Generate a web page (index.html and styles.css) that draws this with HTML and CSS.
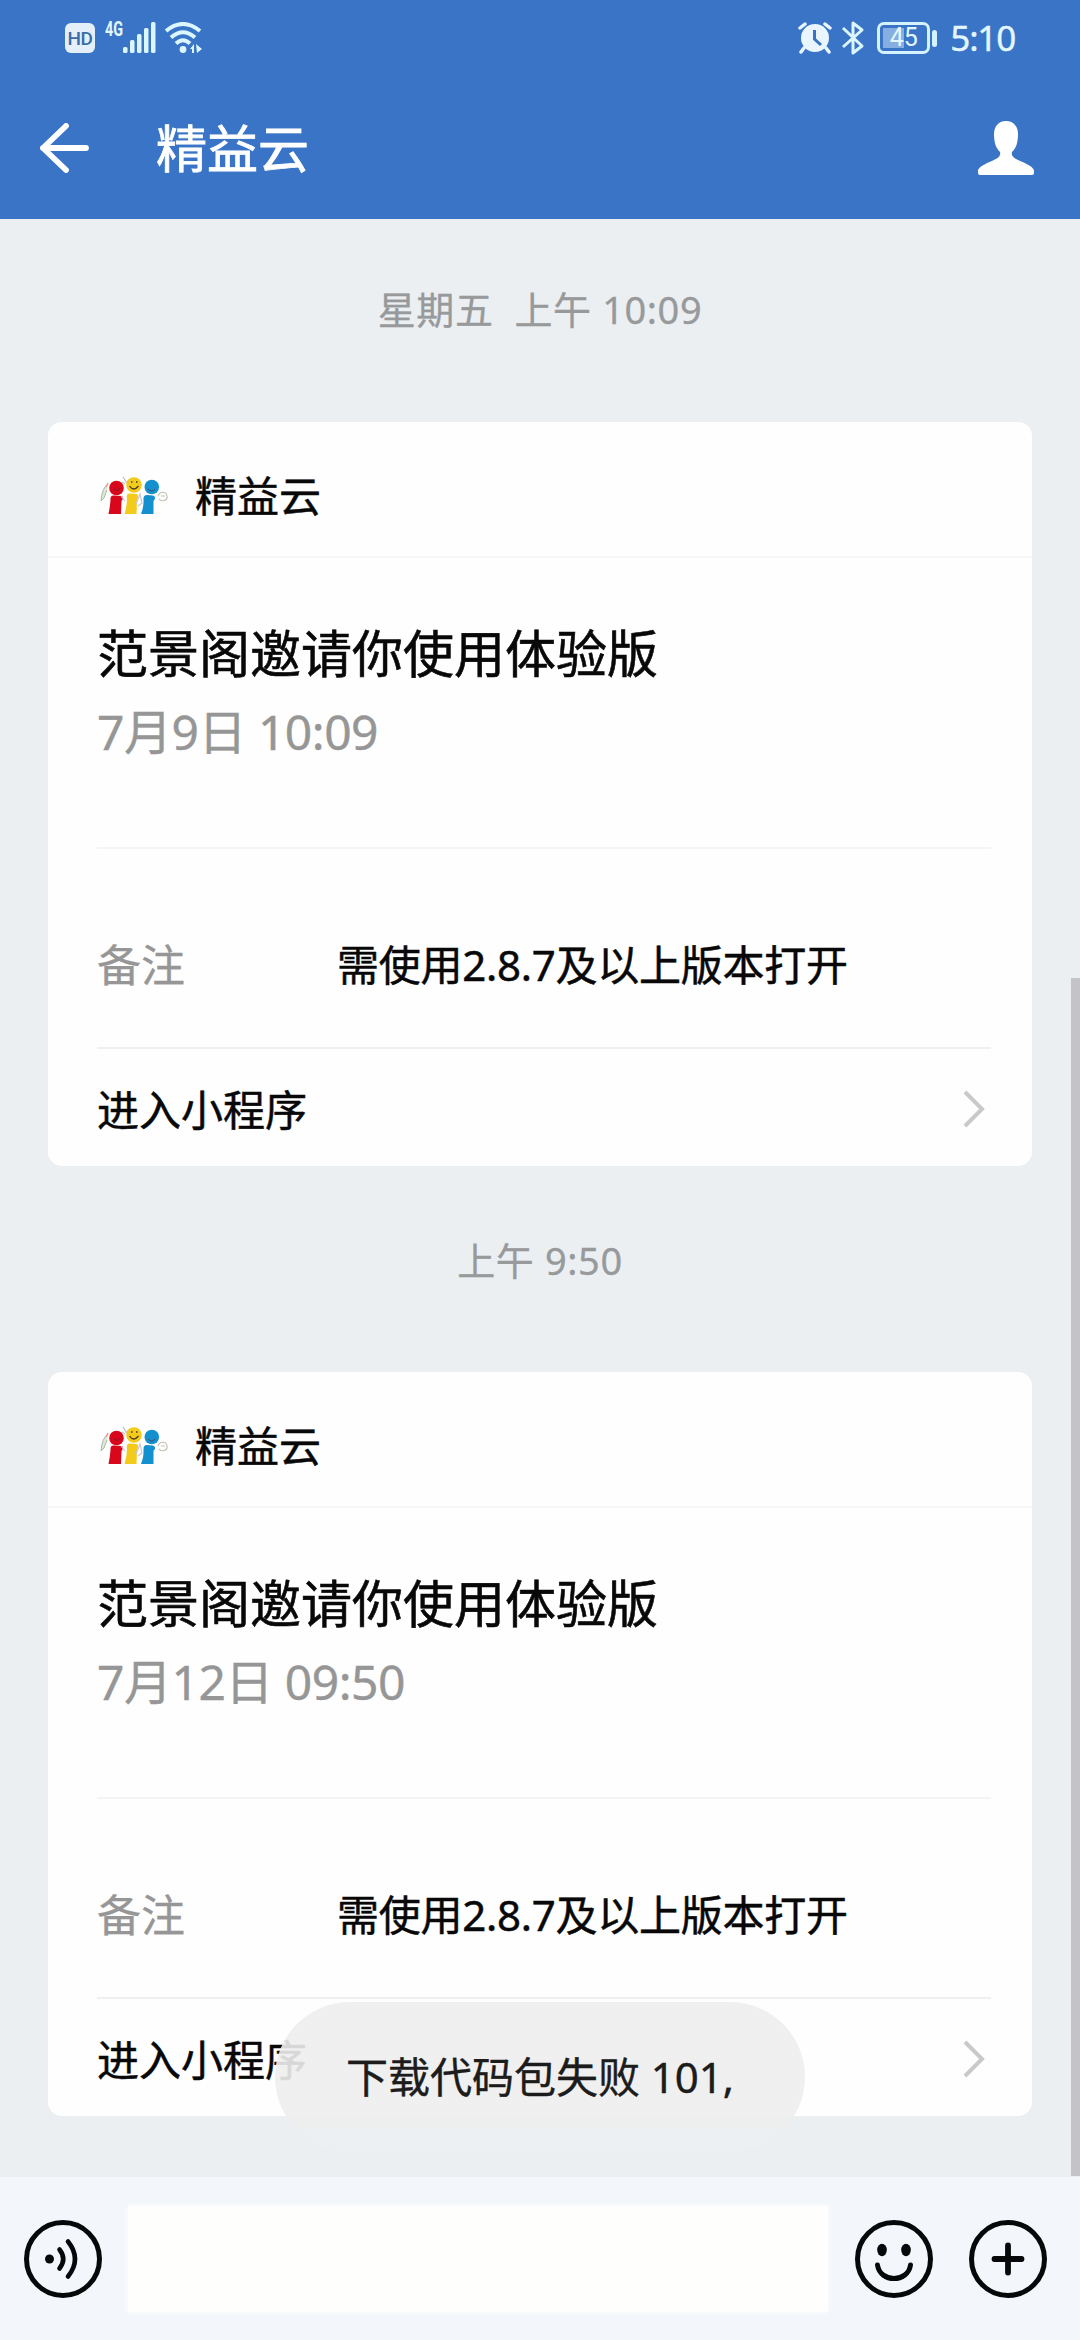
FILE: index.html
```html
<!DOCTYPE html>
<html lang="zh-CN">
<head>
<meta charset="utf-8">
<title>精益云</title>
<link rel="stylesheet" href="styles.css">
</head>
<body>
<svg width="0" height="0" class="defs" aria-hidden="true">
  <symbol id="logo" viewBox="0 0 70 44">
    <path d="M9 10 Q3 14 2 27 L5 24 L8 16" fill="#dfe9da" stroke="#a8b8a0" stroke-width="1"/>
    <path d="M7 13l2-4" stroke="#e79a8c" stroke-width="1.400"/>
    <path d="M24 3l4 6M27 9l4-4M23 8l3 2" fill="none" stroke="#c3bac6" stroke-width="1.200"/>
    <path d="M9.500 40Q11 33 11.500 26Q11 21 15 21.500L23 22Q25 24 22.500 27L22 40Z" fill="#d8071c"/>
    <circle cx="17.500" cy="14" r="7.300" fill="#d8071c"/>
    <path d="M25.500 40Q28 32 28 25Q27 19 31 19.500L38 20Q40 22 38 26L37.500 40Z" fill="#f2cb1d"/>
    <circle cx="35" cy="11" r="7.800" fill="#f2cb1d"/>
    <path d="M42 40Q45 32 44.500 26Q44 21 48 21L54 21.500Q58 23 54.500 27L54.500 40Z" fill="#1590cf"/>
    <circle cx="52.800" cy="13" r="7.300" fill="#1590cf"/>
    <path d="M30.500 12q4 6 9 0M32 8h1.500M37 8h1.500" fill="none" stroke="#4b3a20" stroke-width="1.300"/>
    <path d="M15 15q4 3 6-1M49 15q4 4 7 0" fill="none" stroke="#5a2030" stroke-opacity=".6" stroke-width="1"/>
    <path d="M59 22c2-5 8-5 9 0s-6 6-8 3M62 22h4" fill="none" stroke="#c6c0b4" stroke-width="1.200"/>
    <path d="M37 30l4-10 2 9-4 3M22 22l4 5" fill="none" stroke="#c9c6d6" stroke-width="1.200"/>
  </symbol>
  <symbol id="chevron" viewBox="0 0 24 40">
    <path d="M3 3L20 20L3 37" fill="none" stroke="#c9c9c9" stroke-width="4"/>
  </symbol>
</svg>
<div class="screen">
  <header class="top">
    <div class="status">
      <div class="status-left">
        <span class="hd">HD</span>
        <span class="net">4G</span>
        <svg class="signal" width="33" height="32" viewBox="0 0 33 32" fill="#dcf6ff"><rect x="0" y="25" width="4.500" height="6" rx="1.500"/><rect x="7" y="18" width="4.500" height="13" rx="1.500"/><rect x="14" y="12" width="4.500" height="19" rx="1.500"/><rect x="21" y="6" width="4.500" height="25" rx="1.500"/><rect x="28" y="0" width="4.500" height="31" rx="1.500"/></svg>
        <svg class="wifi" width="38" height="32" viewBox="0 0 38 32"><g fill="none" stroke="#dcf6ff" stroke-width="4"><path d="M1 9Q18 -5 35 9"/><path d="M6 15.500Q18 5 30 15.500"/><path d="M11 21.500Q18 15 25 21.500"/></g><circle cx="18" cy="27.500" r="3.400" fill="#dcf6ff"/><path d="M25 27L29 22V31H27V27ZM31 22L37 27L32 31Z" fill="#dcf6ff"/></svg>
      </div>
      <div class="status-right">
        <svg class="alarm" width="34" height="32" viewBox="0 0 34 32"><circle cx="17" cy="16" r="14" fill="#eaf6ff"/><path d="M2 6L7 2M27 2L32 6M6 26L3 30M28 26L31 30" stroke="#eaf6ff" stroke-width="3.500" stroke-linecap="round"/><path d="M16.500 8V17L23 23" fill="none" stroke="#3974c4" stroke-width="3"/></svg>
        <svg class="bt" width="24" height="36" viewBox="0 0 24 36"><path d="M2 8L21 26L12 33V3L21 10L2 27" fill="none" stroke="#dcf6ff" stroke-width="3" stroke-linejoin="round"/></svg>
        <div class="battery"><span class="cell">45</span><span class="tip"></span></div>
        <span class="clock">5:10</span>
      </div>
    </div>
    <div class="nav">
      <svg class="back" width="52" height="50" viewBox="0 0 52 50"><path d="M27 3L4 25L27 47M4 25H47" fill="none" stroke="#fff" stroke-width="5.800" stroke-linecap="round" stroke-linejoin="round"/></svg>
      <h1 class="nav-title">精益云</h1>
      <svg class="user" width="58" height="56" viewBox="0 0 58 56"><path d="M29 1C21 1 17 7 17 14C17 23 19 28 23 32C24 36 21 38 17 40C8 44 1 47 1 51V53Q1 55 3 55H55Q57 55 57 53V51C57 47 50 44 41 40C37 38 34 36 35 32C39 28 41 23 41 14C41 7 37 1 29 1Z" fill="#fff"/></svg>
    </div>
  </header>
  <main class="chat">
    <p class="stamp stamp-first">星期五&nbsp; 上午 10:09</p>
    <section class="card">
      <div class="card-head"><svg class="logo" width="70" height="44"><use href="#logo"/></svg><span class="app">精益云</span></div>
      <div class="card-body">
        <div class="intro"><h2 class="card-title">范景阁邀请你使用体验版</h2><p class="date">7月9日 10:09</p></div>
        <div class="note"><span class="label">备注</span><span class="value">需使用2.8.7及以上版本打开</span></div>
        <div class="enter"><span class="link">进入小程序</span><svg class="chev" width="24" height="40"><use href="#chevron"/></svg></div>
      </div>
    </section>
    <p class="stamp stamp-next">上午 9:50</p>
    <section class="card">
      <div class="card-head"><svg class="logo" width="70" height="44"><use href="#logo"/></svg><span class="app">精益云</span></div>
      <div class="card-body">
        <div class="intro"><h2 class="card-title">范景阁邀请你使用体验版</h2><p class="date">7月12日 09:50</p></div>
        <div class="note"><span class="label">备注</span><span class="value">需使用2.8.7及以上版本打开</span></div>
        <div class="enter"><span class="link">进入小程序</span><svg class="chev" width="24" height="40"><use href="#chevron"/></svg></div>
      </div>
    </section>
    <div class="scrollbar"></div>
    <div class="toast">下载代码包失败 101,</div>
  </main>
  <footer class="composer">
    <svg class="round" width="78" height="78" viewBox="0 0 78 78" fill="none" stroke="#06080a" stroke-width="5" stroke-linecap="round"><circle cx="39" cy="39" r="36.500"/><circle cx="25.500" cy="39" r="4.500" fill="#06080a" stroke="none"/><path d="M35.500 29.500Q43 39 35.500 48.500M44 21.500Q58 39 44 56.500" stroke-width="4.600"/></svg>
    <div class="input"></div>
    <svg class="round" width="78" height="78" viewBox="0 0 78 78" fill="none" stroke="#06080a" stroke-width="5" stroke-linecap="round"><circle cx="39" cy="39" r="36.500"/><g fill="#06080a" stroke="none"><ellipse cx="27" cy="30" rx="4.800" ry="6.200"/><ellipse cx="51" cy="30" rx="4.800" ry="6.200"/></g><path d="M22.500 45C25 63 53 63 55.500 45"/></svg>
    <svg class="round" width="78" height="78" viewBox="0 0 78 78" fill="none" stroke="#06080a" stroke-width="5" stroke-linecap="round"><circle cx="39" cy="39" r="36.500"/><path d="M39 25.500V52.500M25.500 39H52.500" stroke-width="5.800"/></svg>
  </footer>
</div>
</body>
</html>
```

FILE: styles.css
```css
* { box-sizing: border-box; margin: 0; padding: 0; }
body { font-family: "Noto Sans", "Noto Sans CJK SC", sans-serif; font-weight: 400; color: #080808; }
svg { display: block; flex: none; }
.defs { position: absolute; }
.screen { width: 1080px; height: 2340px; display: flex; flex-direction: column; overflow: hidden; background: #ebeff2; }

.top { height: 219px; flex: none; background: #3974c6; display: flex; flex-direction: column; }
.status { height: 76px; display: flex; justify-content: space-between; padding: 0 65px 0 65px; color: #e2f7ff; }
.status-left, .status-right { display: flex; align-items: center; }
.hd { width: 30px; height: 30px; border-radius: 6px; background: #e4effa; color: #3b6ca8; font: 500 19px/31px Roboto, sans-serif; text-align: center; letter-spacing: -0.5px; }
.net { width: 18px; margin-left: 10px; margin-bottom: 18px; font: 700 20px/20px Roboto, sans-serif; transform: scaleX(0.72); transform-origin: left; }
.wifi { margin-left: 9px; }
.bt { margin-left: 9px; }
.battery { display: flex; align-items: center; margin-left: 12px; }
.cell { width: 53px; height: 32px; border: 3px solid #d4f3ff; border-radius: 7px; font: 400 25px/26px Roboto, sans-serif; text-align: center; background: linear-gradient(90deg, #87aee0 0 21px, transparent 21px) 3px 3px / 44px 20px no-repeat; }
.tip { width: 5px; height: 17px; border-radius: 3px; background: #d4f3ff; margin-left: 2px; }
.clock { margin-left: 13px; font-size: 35px; line-height: 76px; letter-spacing: -1.2px; -webkit-text-stroke: 0.4px; }

.nav { height: 143px; display: flex; align-items: center; padding: 0 45px 0 39px; }
.nav-title { margin-left: 65px; flex: 1; font-size: 51px; line-height: 70px; font-weight: 400; color: #fff; -webkit-text-stroke: 0.8px; }

.chat { flex: 1; position: relative; display: flex; flex-direction: column; }
.stamp { font-size: 38px; line-height: 54px; letter-spacing: 0.6px; text-align: center; color: #97999b; -webkit-text-stroke: 0.3px; }
.stamp-first { margin: 63px 0 86px; }
.stamp-next { margin: 67px 0 85px; }
.card { height: 744px; flex: none; margin: 0 48px; border-radius: 14px; background: #fefefe; }
.card-head { height: 136px; display: flex; align-items: center; padding: 14px 0 0 51px; border-bottom: 2px solid #f7f7f7; }
.app { margin-left: 26px; font-size: 42px; line-height: 60px; -webkit-text-stroke: 0.5px; }
.card-body { padding: 0 41px 0 49px; }
.intro { height: 291px; padding-top: 60px; border-bottom: 2px solid #f4f4f4; }
.card-title { font-size: 51px; line-height: 70px; font-weight: 400; -webkit-text-stroke: 0.6px; }
.date { font-size: 48px; line-height: 70px; letter-spacing: -0.5px; margin-top: 9px; color: #969696; -webkit-text-stroke: 0.4px; }
.note { height: 200px; display: flex; align-items: center; padding-top: 34px; border-bottom: 2px solid #f0f0f0; }
.label { width: 240px; font-size: 44px; line-height: 60px; color: #969696; -webkit-text-stroke: 0.3px; }
.value { font-size: 42px; line-height: 60px; letter-spacing: -0.25px; -webkit-text-stroke: 0.5px; }
.enter { height: 117px; display: flex; align-items: center; justify-content: space-between; padding: 5px 5px 0 0; }
.chev { margin-top: -3px; }
.link { font-size: 42px; line-height: 60px; -webkit-text-stroke: 0.5px; }
.scrollbar { position: absolute; right: 0; top: 759px; bottom: 1px; width: 9px; background: #c4c4c8; }
.toast { position: absolute; left: 275px; top: 1783px; width: 530px; height: 150px; border-radius: 75px; background: linear-gradient(rgba(238, 238, 238, 0.9) 0 126px, rgba(236, 240, 243, 0.9) 126px); color: #1c1c1c; font-size: 42px; line-height: 150px; text-align: center; -webkit-text-stroke: 0.4px; }

.composer { height: 163px; flex: none; display: flex; align-items: center; padding: 0 33px 0 24px; background: #f3f7fb; }
.input { width: 700px; height: 106px; margin-left: 26px; margin-right: 27px; background: #fefffc; box-shadow: 0 0 5px #fefffc; }
.composer .round + .round { margin-left: 36px; }
```
